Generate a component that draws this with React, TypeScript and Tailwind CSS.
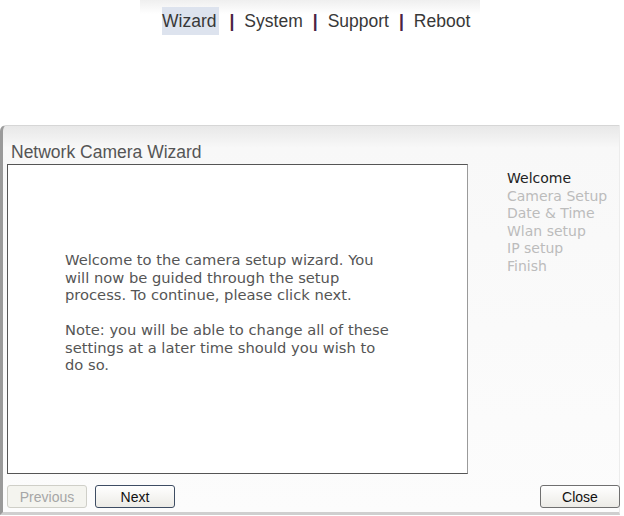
const arial = "font-['Liberation_Sans',Arial,sans-serif]";
const verdana = "font-['DejaVu_Sans',Verdana,sans-serif]";

const steps = ["Welcome", "Camera Setup", "Date & Time", "Wlan setup", "IP setup", "Finish"];

function NavSep() {
  return <span className="mx-[10px] font-bold text-[#4a2243]">|</span>;
}

function WizardButton({
  label,
  variant = "normal",
  className = "",
}: {
  label: string;
  variant?: "normal" | "primary" | "disabled";
  className?: string;
}) {
  const tone =
    variant === "disabled"
      ? "border-[#cfcfc8] bg-[#f4f4ef] text-[#a6a6a6]"
      : variant === "primary"
        ? "border-[#3e4d63] bg-[linear-gradient(to_bottom,#ffffff,#ecebe6)] text-[#111]"
        : "border-[#707070] bg-[linear-gradient(to_bottom,#ffffff,#ecebe6)] text-[#111]";
  return (
    <button
      className={`h-[23px] w-[80px] rounded-[3px] border ${tone} ${arial} text-[14px] leading-none ${className}`}
    >
      {label}
    </button>
  );
}

export default function App() {
  return (
    <div className="h-[516px] w-[624px] overflow-hidden bg-white">
      {/* top menu */}
      <div className="ml-[140px] w-[340px] bg-[linear-gradient(to_bottom,#efefef,#ffffff_14px)] pt-[7px] pl-[22px]">
        <nav className={`flex h-[28px] items-center ${arial} text-[17.5px] text-[#383838]`}>
          <span className="h-[28px] bg-[#dde3ee] pr-[3px] leading-[28px]">Wizard</span>
          <NavSep />
          <span>System</span>
          <NavSep />
          <span>Support</span>
          <NavSep />
          <span>Reboot</span>
        </nav>
      </div>

      {/* wizard panel */}
      <div className="mt-[90px] h-[390px] w-[620px] rounded-tl-[6px] border-t border-r border-b-[3px] border-l-[3px] border-t-[#d6d6d6] border-r-[#ececec] border-b-[#cfcfcf] border-l-[#9a9a9a] bg-[linear-gradient(to_bottom,#e8e8e8,#f8f8f8_22px,#fcfcfc)] pt-[16px] pl-[4px]">
        <h1 className={`ml-[4px] h-[20px] ${arial} text-[17.5px] leading-[20px] text-[#555]`}>
          Network Camera Wizard
        </h1>

        <div className="mt-[2px] flex items-start">
          <div className="h-[310px] w-[461px] border border-[#555] border-r-[#9a9a9a] bg-white pt-[86px] pl-[57px]">
            <div className={`${verdana} text-[14.7px] leading-[17.5px] whitespace-nowrap text-[#555]`}>
              <p>Welcome to the camera setup wizard. You</p>
              <p>will now be guided through the setup</p>
              <p>process. To continue, please click next.</p>
              <p className="mt-[17.5px]">Note: you will be able to change all of these</p>
              <p>settings at a later time should you wish to</p>
              <p>do so.</p>
            </div>
          </div>

          <ul className={`mt-[6px] ml-[39px] ${verdana} text-[14px] leading-[17.5px]`}>
            {steps.map((s, i) => (
              <li key={s} className={i === 0 ? "text-[#222]" : "text-[#bcbcbc]"}>
                {s}
              </li>
            ))}
          </ul>
        </div>

        <div className="mt-[11px] flex w-[613px] items-start gap-[8px]">
          <WizardButton label="Previous" variant="disabled" />
          <WizardButton label="Next" variant="primary" />
          <WizardButton label="Close" className="ml-auto" />
        </div>
      </div>
    </div>
  );
}
